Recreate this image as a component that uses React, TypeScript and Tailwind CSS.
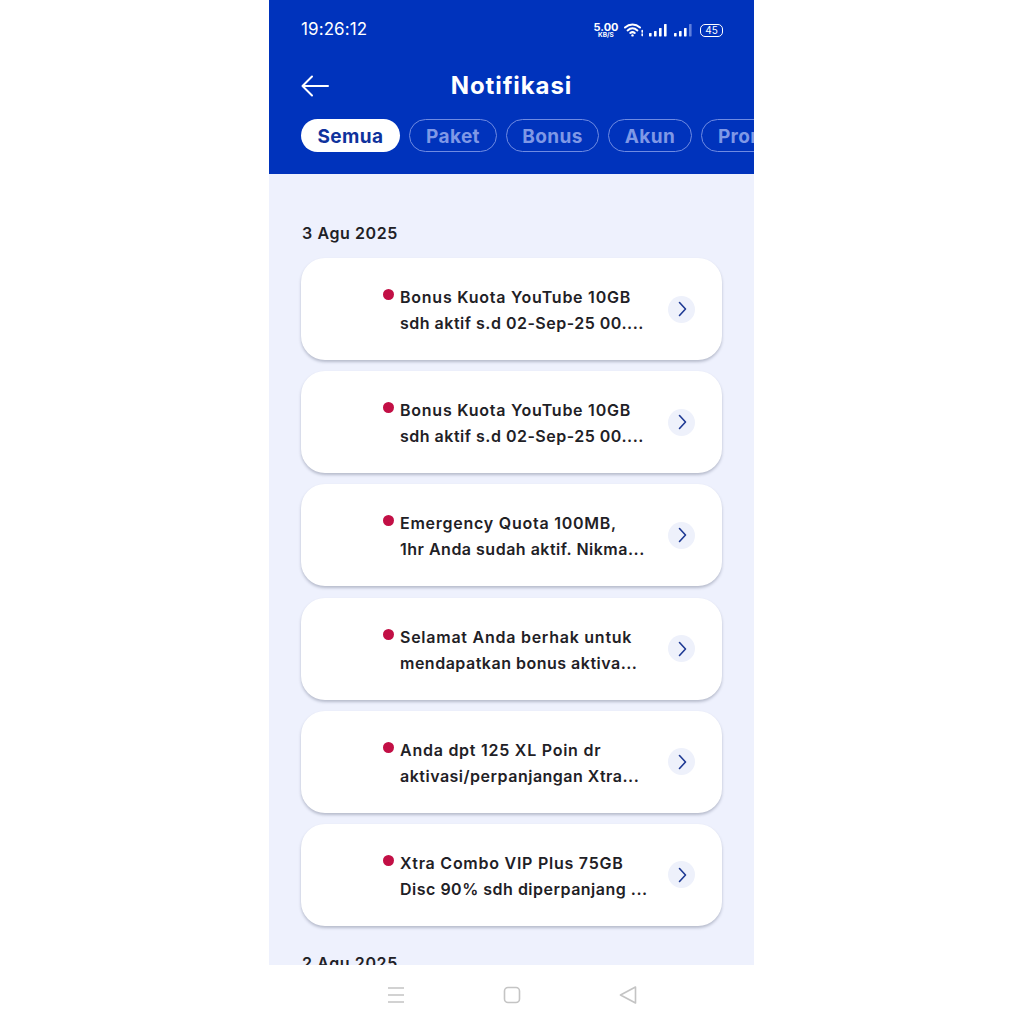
const font = { fontFamily: "Inter, 'Liberation Sans', sans-serif" };

const tabs = [
  { label: "Paket", width: "w-[88px]" },
  { label: "Bonus", width: "w-[93px]" },
  { label: "Akun", width: "w-[84px]" },
  { label: "Promo", width: "w-[96px]" },
];

const items = [
  ["Bonus Kuota YouTube 10GB", "sdh aktif s.d 02-Sep-25 00...."],
  ["Bonus Kuota YouTube 10GB", "sdh aktif s.d 02-Sep-25 00...."],
  ["Emergency Quota 100MB,", "1hr Anda sudah aktif. Nikma..."],
  ["Selamat Anda berhak untuk", "mendapatkan bonus aktiva..."],
  ["Anda dpt 125 XL Poin dr", "aktivasi/perpanjangan Xtra..."],
  ["Xtra Combo VIP Plus 75GB", "Disc 90% sdh diperpanjang ..."],
];

function StatusIcons() {
  return (
    <div className="flex items-center text-white">
      <div className="flex w-[22px] flex-col items-center font-bold">
        <span className="text-[11px] leading-[10px]">5.00</span>
        <span className="text-[6.5px] leading-[7px]">KB/S</span>
      </div>
      <svg width="20" height="14" viewBox="0 0 20 14" fill="none" stroke="white" strokeWidth="2" strokeLinecap="round" className="ml-[7px]">
        <path d="M1 4.5C5.5 .5 11.5 .5 16 4.5" />
        <path d="M3.6 7.4C6.6 4.8 10.4 4.8 13.4 7.4" />
        <path d="M6.2 10C7.6 8.9 9.4 8.9 10.8 10" />
        <circle cx="8.5" cy="12.4" r="1.2" fill="white" stroke="none" />
        <path d="M18.2 7.5v1.6M18.2 11v1.6" strokeWidth="1.6" />
      </svg>
      <svg width="20" height="14" viewBox="0 0 20 14" fill="white" className="ml-[4px]">
        <rect x="1" y="10" width="2.6" height="3.4" rx=".6" />
        <rect x="6" y="8" width="2.6" height="5.4" rx=".6" />
        <rect x="11" y="5" width="2.6" height="8.4" rx=".6" />
        <rect x="16" y="1" width="2.6" height="12.4" rx=".6" />
      </svg>
      <svg width="20" height="14" viewBox="0 0 20 14" fill="white" className="ml-[5px]">
        <rect x="1" y="10" width="2.6" height="3.4" rx=".6" />
        <rect x="6" y="8" width="2.6" height="5.4" rx=".6" />
        <rect x="11" y="5" width="2.6" height="8.4" rx=".6" />
        <rect x="16" y="1" width="2.6" height="12.4" rx=".6" fill="#5f7fdc" />
      </svg>
      <div className="ml-[7px] flex h-[13px] w-[23px] items-center justify-center rounded-[5px] border-[1.5px] border-white text-[10px] leading-none">
        45
      </div>
    </div>
  );
}

function Card({ lines }: { lines: string[] }) {
  return (
    <div className="flex h-[102px] items-center rounded-[24px] bg-white pl-[82px] pr-[27px] shadow-[0_2px_3px_rgba(40,50,80,0.28)]">
      <div className="w-[17px] self-start pt-[31px]">
        <div className="h-[11px] w-[11px] rounded-full bg-[#C20F45]" />
      </div>
      <div className="min-w-0 flex-1 whitespace-nowrap pt-[2px] text-[16px] font-semibold leading-[26px] text-[#1F2126]">
        <div className="tracking-[0.75px]">{lines[0]}</div>
        <div className="tracking-[0.5px]">{lines[1]}</div>
      </div>
      <div className="flex h-[27px] w-[27px] shrink-0 items-center justify-center rounded-full bg-[#EEF1FB] pl-[2px]">
        <svg width="9" height="16" viewBox="0 0 9 16" fill="none" stroke="#1F3A94" strokeWidth="1.6" strokeLinecap="round" strokeLinejoin="round">
          <path d="M1.5 1.5L7.5 8L1.5 14.5" />
        </svg>
      </div>
    </div>
  );
}

export default function App() {
  return (
    <div className="flex h-[1024px] overflow-hidden bg-white pl-[269px]" style={font}>
      <div className="flex w-[485px] flex-col">
        <header className="h-[174px] shrink-0 overflow-hidden bg-[#0033BC] pl-[32px] text-white">
          <div className="flex h-[60px] items-center justify-between pr-[31px]">
            <span className="text-[17px] tracking-[0.1px]">19:26:12</span>
            <StatusIcons />
          </div>
          <div className="relative flex h-[52px] items-center">
            <svg width="28" height="22" viewBox="0 0 28 22" fill="none" stroke="white" strokeWidth="2" strokeLinecap="round" strokeLinejoin="round">
              <path d="M27 11H1.5M11 1.5L1.5 11L11 20.5" />
            </svg>
            <h1 className="absolute left-[-32px] right-0 text-center text-[24px] font-bold tracking-[0.9px]">Notifikasi</h1>
          </div>
          <div className="mt-[7px] flex gap-[9px] overflow-hidden whitespace-nowrap text-[19px] font-bold tracking-[0.4px]">
            <span className="flex h-[33px] w-[99px] shrink-0 items-center justify-center rounded-full bg-white pt-[3px] text-[#0F329C]">
              Semua
            </span>
            {tabs.map((t) => (
              <span
                key={t.label}
                className={`flex h-[33px] shrink-0 items-center justify-center rounded-full border border-[#6F8BE2] pt-[3px] text-[#7F98E6] ${t.width}`}
              >
                {t.label}
              </span>
            ))}
          </div>
        </header>

        <main className="min-h-0 flex-1 overflow-hidden bg-[#EEF1FD] px-[32px]">
          <div className="mt-[49px] pl-[1px] text-[16px] font-semibold leading-[20px] tracking-[0.6px] text-[#1F2126]">3 Agu 2025</div>
          <div className="mt-[15px] flex flex-col gap-[11.2px]">
            {items.map((lines, i) => (
              <Card key={i} lines={lines} />
            ))}
          </div>
          <div className="mt-[27px] pl-[1px] text-[16px] font-semibold leading-[20px] tracking-[0.6px] text-[#1F2126]">2 Agu 2025</div>
        </main>

        <nav className="flex h-[59px] shrink-0 items-center justify-center gap-[98px] bg-white">
          <svg width="18" height="18" viewBox="0 0 18 18" fill="none" stroke="#c4c4c4" strokeWidth="1.4">
            <path d="M1 2h16M1 9h16M1 16h16" />
          </svg>
          <svg width="18" height="18" viewBox="0 0 18 18" fill="none" stroke="#c4c4c4" strokeWidth="1.6">
            <rect x="1.5" y="1.5" width="15" height="15" rx="3.5" />
          </svg>
          <svg width="18" height="18" viewBox="0 0 18 18" fill="none" stroke="#c4c4c4" strokeWidth="1.6" strokeLinejoin="round">
            <path d="M16.5 1L1.5 9L16.5 17Z" />
          </svg>
        </nav>
      </div>
    </div>
  );
}
